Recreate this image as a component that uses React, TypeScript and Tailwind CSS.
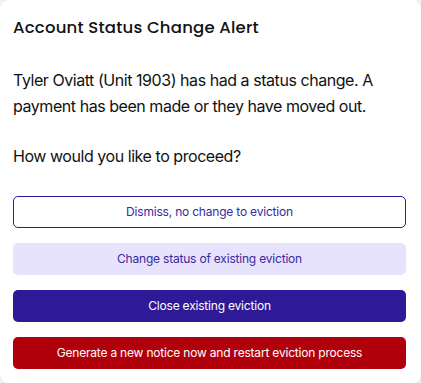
export default function App() {
  return (
    <div className="h-[383px] w-[421px] bg-[#f4f4f6]" style={{ fontFamily: "Inter, 'Noto Sans', sans-serif" }}>
      <div className="flex h-full flex-col rounded-lg bg-white pl-[13px] pr-[15px] pt-[16px] shadow-[0_0_2px_rgba(0,0,0,0.15)]">
        <h2
          className="text-[16.5px] font-medium leading-6 tracking-[0.2px] text-[#111]"
          style={{ fontFamily: "Poppins, 'Open Sans', sans-serif" }}
        >
          Account Status Change Alert
        </h2>
        <p className="mt-[27px] text-[16px] leading-[26px] tracking-[-0.45px] text-[#111]">
          Tyler Oviatt (Unit 1903) has had a status change. A payment has been made or they have moved out.
        </p>
        <p className="mt-[24px] text-[16px] leading-[26px] tracking-[-0.45px] text-[#111]">
          How would you like to proceed?
        </p>
        <div className="mt-[27px] flex flex-col gap-[15px] text-[12px] tracking-[-0.2px]">
          <button className="h-[32px] rounded-[5px] border border-[#2e1a96] bg-white text-[#3a28a0]">
            Dismiss, no change to eviction
          </button>
          <button className="h-[32px] rounded-[5px] bg-[#e8e3fd] text-[#3a28a0]">
            Change status of existing eviction
          </button>
          <button className="h-[32px] rounded-[5px] bg-[#2e1a96] text-white">
            Close existing eviction
          </button>
          <button className="h-[32px] rounded-[5px] bg-[#b0000c] text-white">
            Generate a new notice now and restart eviction process
          </button>
        </div>
      </div>
    </div>
  );
}
